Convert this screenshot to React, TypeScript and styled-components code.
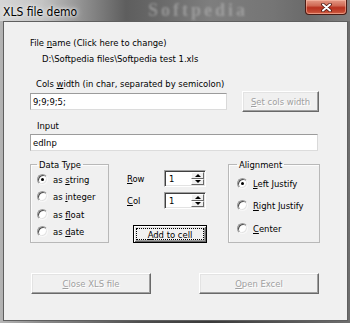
import React from "react";
import styled, { createGlobalStyle } from "styled-components";

const UI_FONT = `"DejaVu Sans Condensed", "Liberation Sans", Arial, sans-serif`;

const GlobalStyle = createGlobalStyle`
  html, body {
    margin: 0;
    padding: 0;
    background: #ffffff;
  }
  body {
    font-family: ${UI_FONT};
  }
`;

const Window = styled.div`
  width: 350px;
  height: 323px;
  display: flex;
  flex-direction: column;
  overflow: hidden;
  background: linear-gradient(90deg, #b4b4b4 0, #8a8a8a 12%, #4e4e4e 40%, #3a3a3a 60%, #5a5a5a 85%, #6e6e6e 100%);
`;

const TitleBar = styled.div`
  position: relative;
  height: 21px;
  flex: none;
  padding: 1px 0 0 3px;
  box-sizing: border-box;
  overflow: hidden;
  background: linear-gradient(90deg, #d6d6d6 0, #c4c4c4 12%, #8e8e8e 24%, #5e5e5e 36%, #676767 44%, #7e7e7e 60%, #757575 78%, #6a6a6a 88%, #808080 100%);
`;

const TitleText = styled.span`
  position: relative;
  font-size: 12px;
  line-height: 15px;
  color: #000;
  text-shadow: 0 0 6px #f4f4f4, 0 0 3px #ffffff;
`;

const Watermark = styled.span`
  position: absolute;
  left: 148px;
  top: 0;
  font-family: "Liberation Serif", serif;
  font-weight: bold;
  font-size: 18px;
  line-height: 21px;
  letter-spacing: 3px;
  color: rgba(205, 205, 205, 0.42);
  filter: blur(1px);
`;

const CloseButton = styled.div`
  position: absolute;
  top: 0;
  right: 3px;
  width: 42px;
  height: 15px;
  box-sizing: border-box;
  border: 1px solid #4a1b14;
  border-top: none;
  border-radius: 0 0 4px 4px;
  background: linear-gradient(180deg, #e49a86 0, #d06a55 40%, #b8321f 55%, #c44a33 85%, #d66b4f 100%);
  box-shadow: inset 0 0 0 1px rgba(255, 200, 180, 0.5);
  display: flex;
  align-items: center;
  justify-content: center;
`;

const Client = styled.div`
  flex: 1;
  margin: 0 2px 2px 3px;
  border: 1px solid #5f5f5f;
  background: #f0f0f0;
  padding: 14px 0 0 26px;
  display: flex;
  flex-direction: column;
  align-items: flex-start;
  font-family: ${UI_FONT};
  font-size: 9.4px;
  line-height: 13px;
  color: #000;
`;

const Key = styled.span`
  text-decoration: underline;
  text-underline-offset: 1px;
`;

const Label = styled.div<{ $indent?: number; $top?: number }>`
  margin-left: ${(p) => p.$indent ?? 0}px;
  margin-top: ${(p) => p.$top ?? 0}px;
  white-space: nowrap;
`;

const EditRow = styled.div`
  display: flex;
  align-items: flex-start;
  gap: 15px;
`;

const Edit = styled.div<{ $width: number; $top?: number }>`
  width: ${(p) => p.$width}px;
  height: 17px;
  margin-top: ${(p) => p.$top ?? 0}px;
  box-sizing: border-box;
  background: #fff;
  border: 1px solid;
  border-color: #9b9b9b #d9d9d9 #dcdcdc #a4a4a4;
  padding: 0 2px;
  line-height: 15px;
  white-space: nowrap;
`;

const Button = styled.button<{ $width: number; $height: number; $top?: number; $left?: number; $isDefault?: boolean }>`
  position: relative;
  width: ${(p) => p.$width}px;
  height: ${(p) => p.$height}px;
  margin: ${(p) => p.$top ?? 0}px 0 0 ${(p) => p.$left ?? 0}px;
  padding: 0;
  box-sizing: border-box;
  background: #f0f0f0;
  font-family: ${UI_FONT};
  font-size: 9.4px;
  line-height: 13px;
  color: #000;
  border: 1px solid;
  border-color: #ffffff #696969 #696969 #ffffff;
  box-shadow: inset -1px -1px 0 #a0a0a0, inset 1px 1px 0 #e3e3e3;

  ${(p) =>
    p.$isDefault
      ? `
    border: 1px solid #000;
    box-shadow: inset 1px 1px 0 #fff, inset -1px -1px 0 #696969, inset 2px 2px 0 #e3e3e3, inset -2px -2px 0 #a0a0a0;
    &::after {
      content: "";
      position: absolute;
      inset: 2px;
      border: 1px dotted #000;
    }
  `
      : ``}

  &:disabled {
    color: #a0a0a0;
    text-shadow: 1px 1px 0 #ffffff;
  }
`;

const GroupRow = styled.div`
  display: flex;
  align-items: flex-start;
  margin-top: 7px;
`;

const GroupBox = styled.fieldset<{ $width: number; $padTop: number; $padLeft: number; $left?: number }>`
  width: ${(p) => p.$width}px;
  height: 85px;
  box-sizing: border-box;
  margin: 0 0 0 ${(p) => p.$left ?? 0}px;
  min-inline-size: 0;
  padding: ${(p) => p.$padTop}px 0 0 ${(p) => p.$padLeft}px;
  border: 1px solid #b8b8b8;
  box-shadow: inset 1px 1px 0 #fcfcfc;
`;

const Legend = styled.legend`
  padding: 0 2px;
  margin: 0;
  font-size: 9.4px;
  line-height: 13px;
`;

const RadioList = styled.div<{ $gap: number }>`
  display: flex;
  flex-direction: column;
  gap: ${(p) => p.$gap}px;
`;

const RadioRow = styled.div`
  display: flex;
  align-items: center;
  gap: 5px;
  height: 14px;
  white-space: nowrap;
`;

const RadioCircle = styled.span<{ $checked?: boolean }>`
  position: relative;
  width: 11px;
  height: 11px;
  flex: none;
  box-sizing: border-box;
  border-radius: 50%;
  background: #ffffff;
  border: 1px solid;
  border-color: #9a9a9a #f8f8f8 #f8f8f8 #9a9a9a;
  box-shadow: inset 1px 1px 0 #505050, inset -1px -1px 0 #e3e3e3;

  ${(p) =>
    p.$checked
      ? `
    &::after {
      content: "";
      position: absolute;
      left: 3px;
      top: 3px;
      width: 3px;
      height: 3px;
      border-radius: 50%;
      background: #000;
    }
  `
      : ``}
`;

const MidColumn = styled.div`
  display: flex;
  flex-direction: column;
  align-items: flex-start;
  margin: 12px 0 0 18px;
`;

const SpinGrid = styled.div`
  display: grid;
  grid-template-columns: 37px 42px;
  row-gap: 5px;
  align-items: center;
`;

const SpinBox = styled.div`
  width: 42px;
  height: 17px;
  box-sizing: border-box;
  display: flex;
  background: #fff;
  border: 1px solid;
  border-color: #a0a0a0 #ffffff #ffffff #a0a0a0;
  box-shadow: inset 1px 1px 0 #404040, inset -1px -1px 0 #e3e3e3;
  padding: 1px;
`;

const SpinValue = styled.span`
  flex: 1;
  padding-left: 3px;
  line-height: 13px;
`;

const SpinButtons = styled.div`
  width: 13px;
  display: flex;
  flex-direction: column;
`;

const SpinArrow = styled.div<{ $down?: boolean }>`
  flex: 1;
  box-sizing: border-box;
  background: #f0f0f0;
  border: 1px solid;
  border-color: #ffffff #696969 #696969 #ffffff;
  display: flex;
  align-items: center;
  justify-content: center;

  &::before {
    content: "";
    width: 0;
    height: 0;
    border-left: 3px solid transparent;
    border-right: 3px solid transparent;
    ${(p) => (p.$down ? `border-top: 3px solid #000;` : `border-bottom: 3px solid #000;`)}
  }
`;

const ButtonRow = styled.div`
  display: flex;
  gap: 48px;
  margin: 30px 0 0 1px;
`;

const Spin = ({ value }: { value: string }) => (
  <SpinBox>
    <SpinValue>{value}</SpinValue>
    <SpinButtons>
      <SpinArrow />
      <SpinArrow $down />
    </SpinButtons>
  </SpinBox>
);

const Radio = ({ checked, children }: { checked?: boolean; children: React.ReactNode }) => (
  <RadioRow>
    <RadioCircle $checked={checked} />
    <span>{children}</span>
  </RadioRow>
);

const App = () => {
  return (
    <>
      <GlobalStyle />
      <Window>
        <TitleBar>
          <Watermark>Softpedia</Watermark>
          <TitleText>XLS file demo</TitleText>
          <CloseButton>
            <svg width="11" height="9" viewBox="0 0 11 9">
              <path d="M2 1.5 L9 7.5 M9 1.5 L2 7.5" stroke="#4a1710" strokeWidth="3.6" strokeLinecap="round" />
              <path d="M2 1.5 L9 7.5 M9 1.5 L2 7.5" stroke="#ffffff" strokeWidth="2" strokeLinecap="round" />
            </svg>
          </CloseButton>
        </TitleBar>
        <Client>
          <Label>
            File <Key>n</Key>ame (Click here to change)
          </Label>
          <Label $indent={12} $top={3}>
            D:\Softpedia files\Softpedia test 1.xls
          </Label>
          <Label $indent={6} $top={12}>
            Cols <Key>w</Key>idth (in char, separated by semicolon)
          </Label>
          <EditRow>
            <Edit $width={197} $top={3}>
              9;9;9;5;
            </Edit>
            <Button $width={77} $height={21} $top={1} disabled>
              <Key>S</Key>et cols width
            </Button>
          </EditRow>
          <Label $indent={7} $top={7}>
            Input
          </Label>
          <Edit $width={288} $top={2}>
            edInp
          </Edit>
          <GroupRow>
            <GroupBox $width={79} $padTop={1} $padLeft={6}>
              <Legend>Data Type</Legend>
              <RadioList $gap={3.6}>
                <Radio checked>
                  as <Key>s</Key>tring
                </Radio>
                <Radio>
                  as <Key>i</Key>nteger
                </Radio>
                <Radio>
                  as <Key>f</Key>loat
                </Radio>
                <Radio>
                  as <Key>d</Key>ate
                </Radio>
              </RadioList>
            </GroupBox>
            <MidColumn>
              <SpinGrid>
                <span>
                  <Key>R</Key>ow
                </span>
                <Spin value="1" />
                <span>
                  <Key>C</Key>ol
                </span>
                <Spin value="1" />
              </SpinGrid>
              <Button $width={74} $height={18} $top={16} $left={6} $isDefault>
                <Key>A</Key>dd to cell
              </Button>
            </MidColumn>
            <GroupBox $width={92} $padTop={5} $padLeft={8} $left={21}>
              <Legend>Alignment</Legend>
              <RadioList $gap={8.5}>
                <Radio checked>
                  <Key>L</Key>eft Justify
                </Radio>
                <Radio>
                  <Key>R</Key>ight Justify
                </Radio>
                <Radio>
                  <Key>C</Key>enter
                </Radio>
              </RadioList>
            </GroupBox>
          </GroupRow>
          <ButtonRow>
            <Button $width={120} $height={21} disabled>
              <Key>C</Key>lose XLS file
            </Button>
            <Button $width={120} $height={21} disabled>
              <Key>O</Key>pen Excel
            </Button>
          </ButtonRow>
        </Client>
      </Window>
    </>
  );
};

export default App;
